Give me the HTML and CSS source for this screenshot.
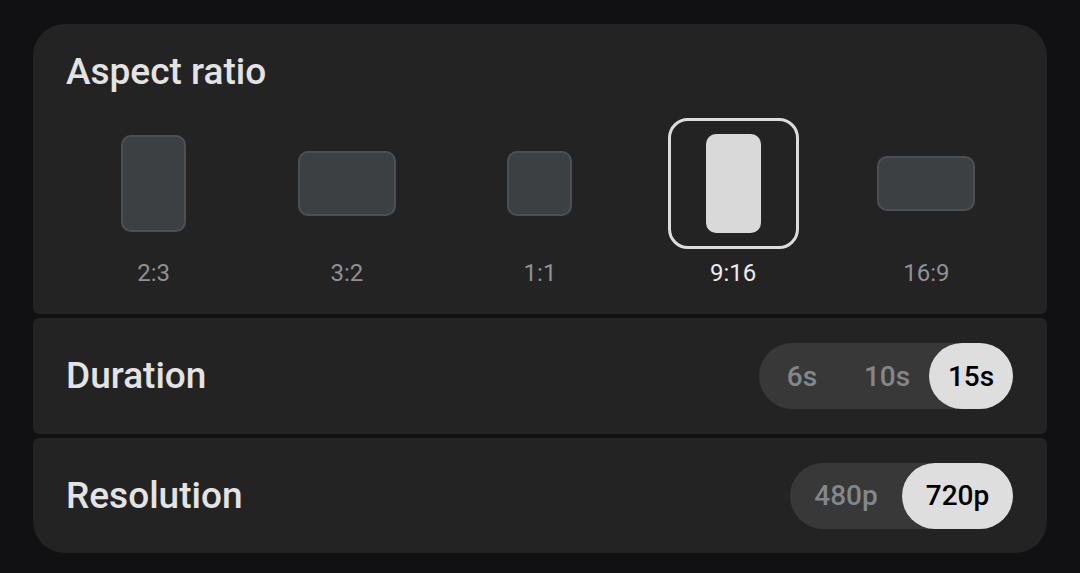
FILE: index.html
```html
<!DOCTYPE html>
<html lang="en">
<head>
<meta charset="utf-8">
<title>Video settings</title>
<link rel="stylesheet" href="styles.css">
</head>
<body>
<div class="panel">
  <section class="card aspect">
    <h2 class="title">Aspect ratio</h2>
    <div class="ratios">
      <div class="ratio">
        <div class="shape-box"><div class="shape r23"></div></div>
        <div class="label">2:3</div>
      </div>
      <div class="ratio">
        <div class="shape-box"><div class="shape r32"></div></div>
        <div class="label">3:2</div>
      </div>
      <div class="ratio">
        <div class="shape-box"><div class="shape r11"></div></div>
        <div class="label">1:1</div>
      </div>
      <div class="ratio selected">
        <div class="shape-box"><div class="shape r916"></div></div>
        <div class="label">9:16</div>
      </div>
      <div class="ratio">
        <div class="shape-box"><div class="shape r169"></div></div>
        <div class="label">16:9</div>
      </div>
    </div>
  </section>
  <section class="card row">
    <h2 class="title">Duration</h2>
    <div class="seg seg-dur">
      <span class="opt">6s</span>
      <span class="opt">10s</span>
      <span class="opt on">15s</span>
    </div>
  </section>
  <section class="card row">
    <h2 class="title">Resolution</h2>
    <div class="seg seg-res">
      <span class="opt">480p</span>
      <span class="opt on">720p</span>
    </div>
  </section>
</div>
</body>
</html>
```

FILE: styles.css
```css
html, body {
  margin: 0;
  padding: 0;
  background: #111113;
}
body {
  font-family: Roboto, "Noto Sans", "Liberation Sans", sans-serif;
  color: #e3e3e3;
  padding: 24px 33px 0;
}
.panel {
  width: 1014px;
  display: flex;
  flex-direction: column;
  gap: 4px;
  border-radius: 32px;
  overflow: hidden;
}
.card {
  background: #232323;
  border-radius: 6px;
  box-sizing: border-box;
}
.title {
  margin: 0;
  font-size: 37px;
  font-weight: 500;
  line-height: 44px;
  color: #e3e3e3;
}
.aspect {
  height: 290px;
  padding: 26px 24px 0;
}
.aspect .title {
  padding-left: 9px;
}
.ratios {
  display: grid;
  grid-template-columns: repeat(5, 1fr);
  margin-top: 24px;
}
.ratio {
  display: flex;
  flex-direction: column;
  align-items: center;
}
.shape-box {
  width: 131px;
  height: 131px;
  box-sizing: border-box;
  display: flex;
  align-items: center;
  justify-content: center;
  border-radius: 20px;
}
.shape {
  box-sizing: border-box;
  background: #3c4043;
  border: 2px solid #4c5054;
  border-radius: 10px;
}
.r23 { width: 65px; height: 97px; }
.r32 { width: 98px; height: 65px; }
.r11 { width: 65px; height: 65px; }
.r916 { width: 55px; height: 99px; }
.r169 { width: 98px; height: 55px; }
.selected .shape-box {
  border: 3px solid #dcdcdc;
}
.selected .shape {
  background: #d9d9d9;
  border-color: #d9d9d9;
}
.label {
  margin-top: 8px;
  font-size: 24px;
  line-height: 32px;
  color: #8e9195;
}
.selected .label {
  color: #ececec;
}
.row {
  height: 116px;
  padding: 0 34px 0 33px;
  display: flex;
  align-items: center;
  justify-content: space-between;
}
.row:last-child {
  height: 115px;
}
.seg {
  display: flex;
  background: #383838;
  border-radius: 33px;
  height: 66px;
}
.opt {
  box-sizing: border-box;
  display: flex;
  align-items: center;
  justify-content: center;
  font-size: 28px;
  font-weight: 500;
  color: #83878b;
  border-radius: 33px;
}
.seg-dur .opt {
  width: 84px;
}
.seg-dur .opt:first-child {
  width: 86px;
}
.seg-res .opt {
  width: 112px;
}
.seg-res .opt.on {
  width: 111px;
}
.opt.on {
  background: #dedede;
  color: #000;
}
```
